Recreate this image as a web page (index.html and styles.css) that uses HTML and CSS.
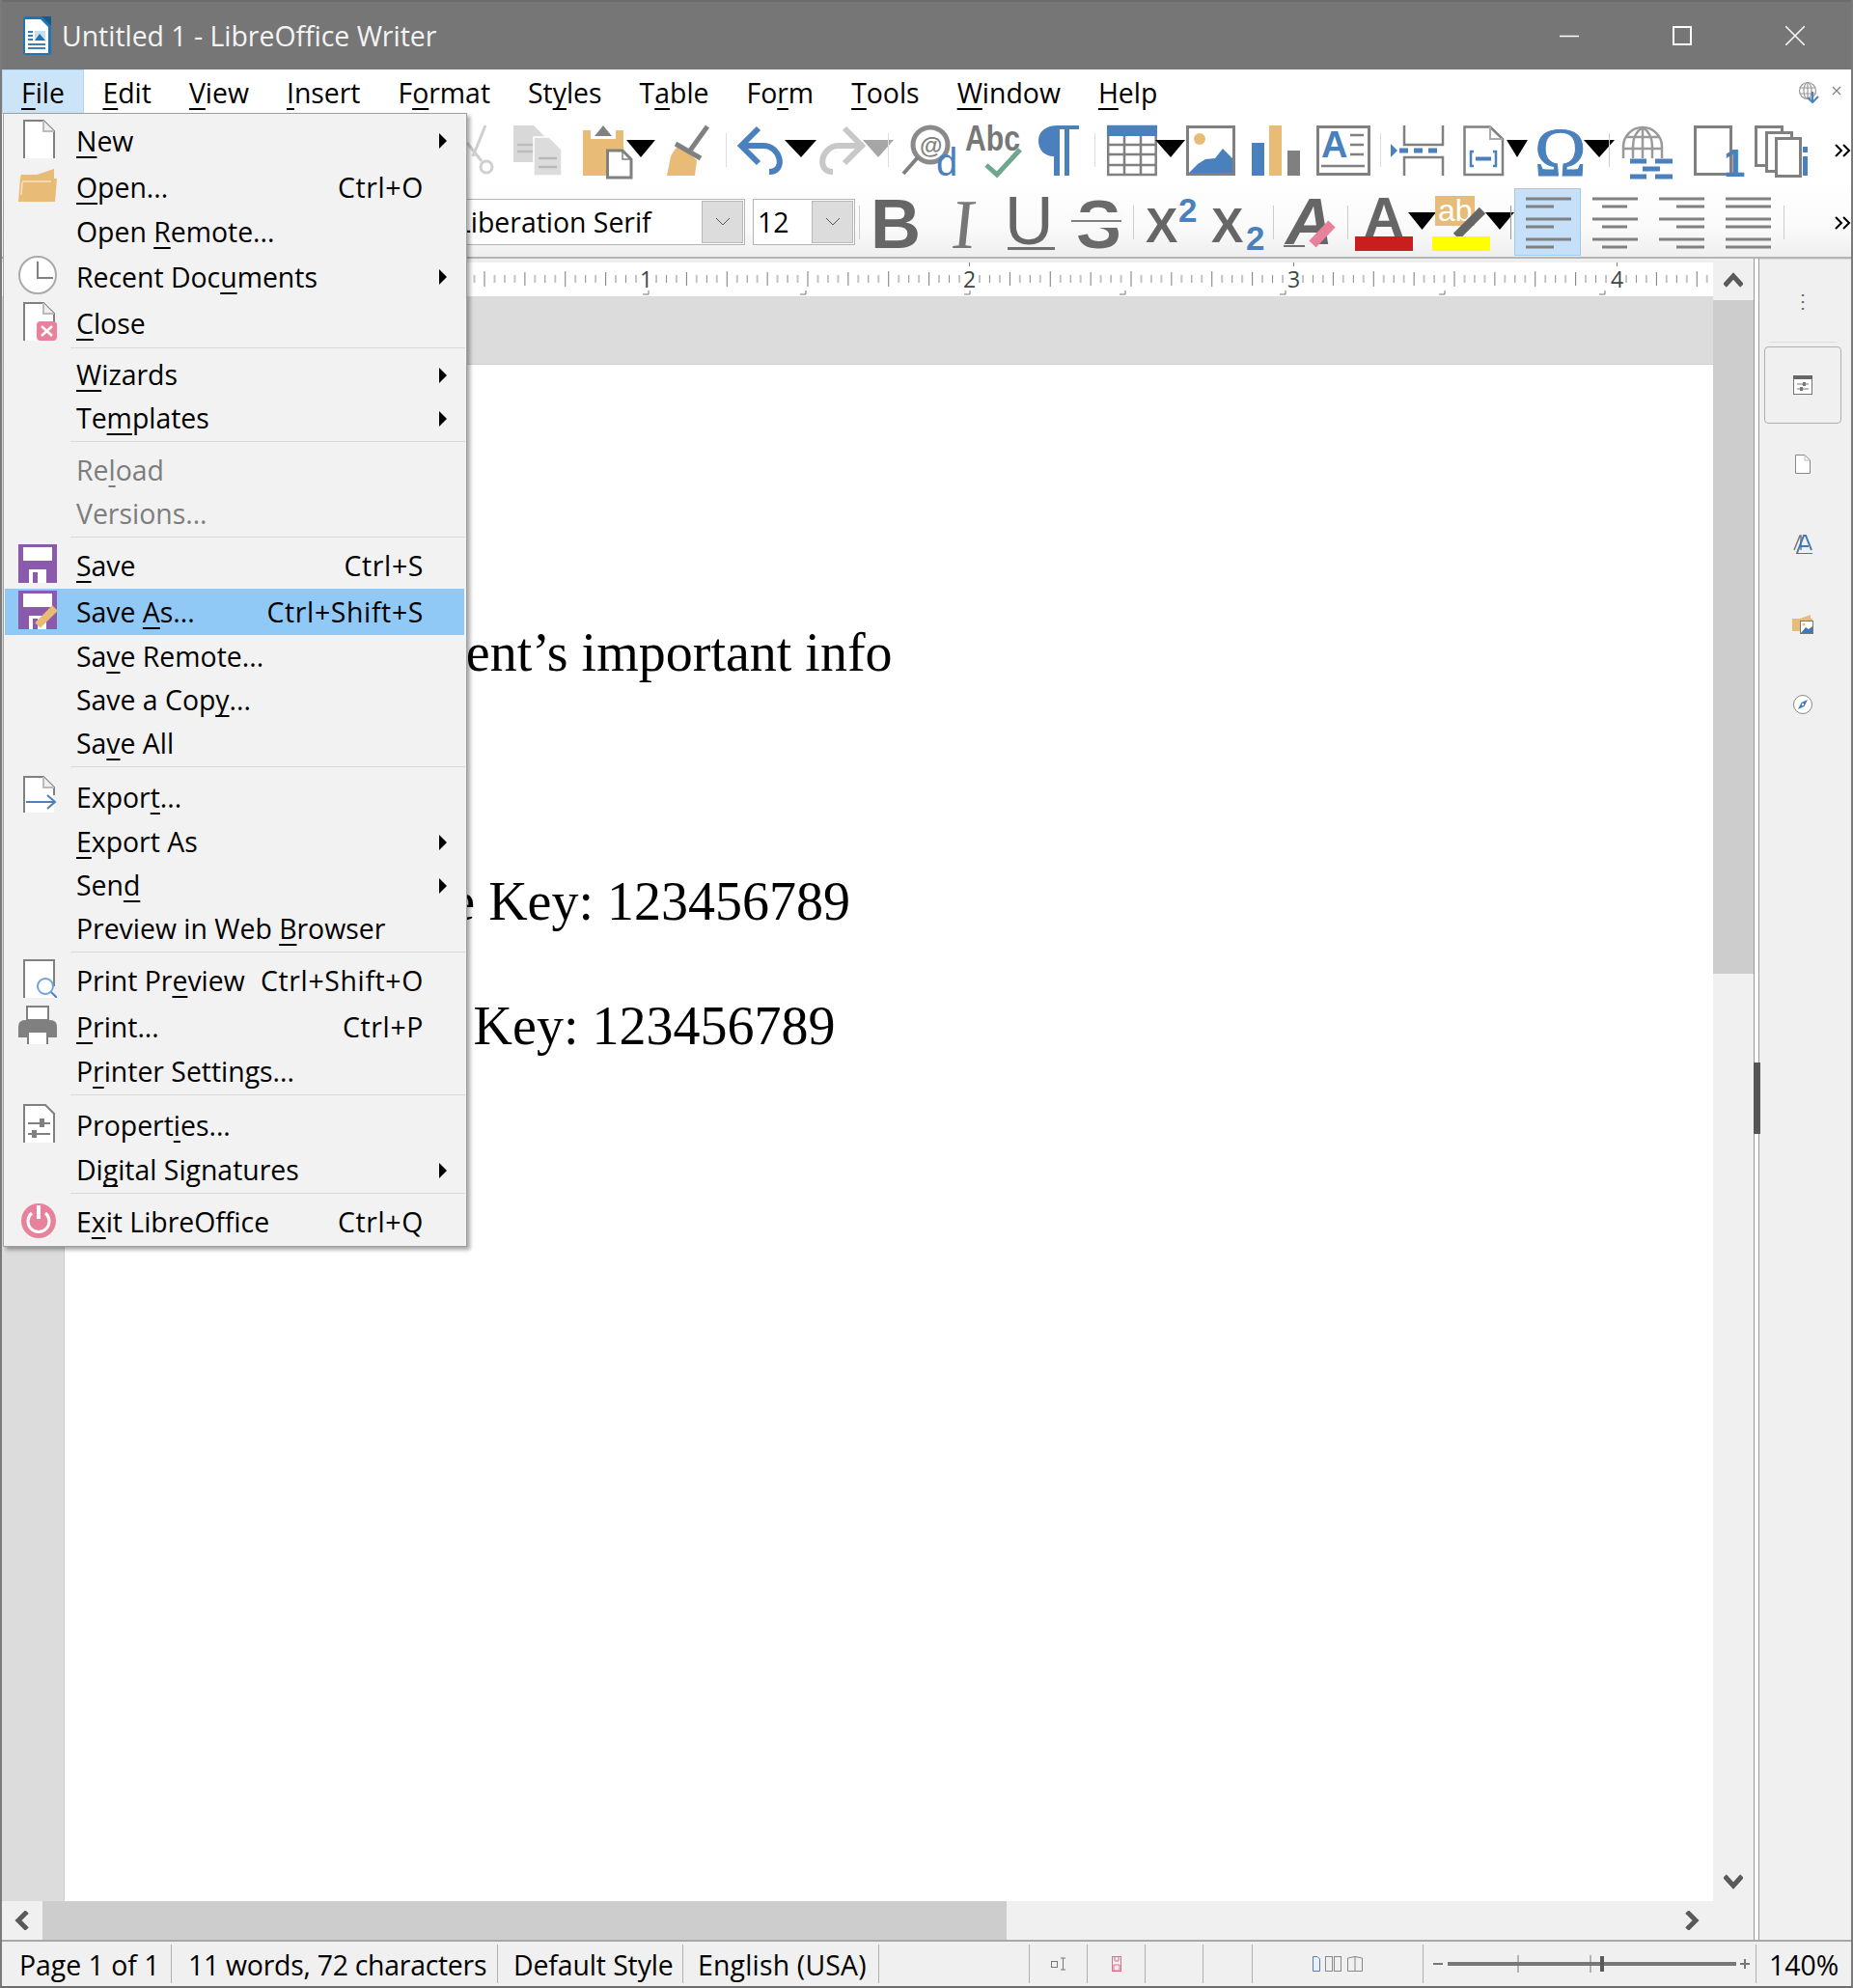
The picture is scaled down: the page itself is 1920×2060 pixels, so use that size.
FILE: index.html
```html
<!DOCTYPE html>
<html lang="en">
<head>
<meta charset="utf-8">
<title>Untitled 1 - LibreOffice Writer</title>
<link rel="stylesheet" href="styles.css">
</head>
<body>
<div class="window">
  <header class="titlebar">
    <svg class="app-icon" width="30" height="40" viewBox="0 0 30 40">
      <path d="M1 3Q1 0 4 0H20L30 10V37Q30 40 27 40H4Q1 40 1 37Z" fill="#1f74b5"/>
      <path d="M3 3H19L27 11V38H3Z" fill="#fff"/>
      <path d="M20 0L30 0V10Z" fill="#125a92"/>
      <path d="M6 15H11V17H6ZM6 19H11V21H6ZM6 23H11V25H6ZM6 28H24V30H6ZM6 32H24V34H6Z" fill="#3a7fb8"/>
      <path d="M13 15H24V25H13Z" fill="#c9dff0"/><path d="M13 25L18 18L24 25Z" fill="#1f74b5"/>
    </svg>
    <span class="title">Untitled 1 - LibreOffice Writer</span>
    <div class="win-controls">
      <svg width="20" height="20" viewBox="0 0 20 20"><path d="M0 10.5H20" stroke="#fff" stroke-width="1.5"/></svg>
      <svg width="20" height="20" viewBox="0 0 20 20"><rect x="1" y="1" width="18" height="18" fill="none" stroke="#fff" stroke-width="2"/></svg>
      <svg width="20" height="20" viewBox="0 0 20 20"><path d="M0 0L20 20M20 0L0 20" stroke="#fff" stroke-width="1.5"/></svg>
    </div>
  </header>

  <nav class="menubar">
    <span class="menu-top active"><u>F</u>ile</span>
    <span class="menu-top"><u>E</u>dit</span>
    <span class="menu-top"><u>V</u>iew</span>
    <span class="menu-top"><u>I</u>nsert</span>
    <span class="menu-top">F<u>o</u>rmat</span>
    <span class="menu-top">St<u>y</u>les</span>
    <span class="menu-top">T<u>a</u>ble</span>
    <span class="menu-top">Fo<u>r</u>m</span>
    <span class="menu-top"><u>T</u>ools</span>
    <span class="menu-top"><u>W</u>indow</span>
    <span class="menu-top"><u>H</u>elp</span>
    <div class="menubar-end">
      <svg width="24" height="24" viewBox="0 0 24 24" fill="none" stroke="#999" stroke-width="1.2">
        <circle cx="10" cy="10" r="8.5"/><ellipse cx="10" cy="10" rx="4" ry="8.5"/><path d="M1.5 7H18.5M1.5 13H18.5M10 1.5V18.5"/>
        <path d="M15 11V21M10 17L15 22L21 16" stroke="#4a80bc" stroke-width="2"/>
      </svg>
      <svg width="10" height="10" viewBox="0 0 10 10"><path d="M1 1L9 9M9 1L1 9" stroke="#808080" stroke-width="1.2"/></svg>
    </div>
  </nav>

  <div class="toolbars">
    <div class="toolrow toolrow-std">
      <svg class="ti" width="47" height="64" viewBox="0 0 47 64" fill="none" stroke="#cfcfcf" stroke-width="3"><path d="M19 4L6 36M0 22L15 41"/><circle cx="20" cy="47" r="6"/></svg>
      <svg class="ti" width="73" height="64" viewBox="0 0 73 64">
        <path d="M1 4H22L34 16V42H1Z" fill="#d8d8d8"/><path d="M5 24H24M5 31H24" stroke="#bdbdbd" stroke-width="2.5"/>
        <path d="M22 16H38L51 29V56H22Z" fill="#dcdcdc" stroke="#fff" stroke-width="1.5"/><path d="M27 38H46M27 47H46" stroke="#b8b8b8" stroke-width="2.5"/>
      </svg>
      <svg class="ti" width="87" height="64" viewBox="0 0 87 64">
        <rect x="0" y="9" width="42" height="47" fill="#e8bc77"/><rect x="8" y="9" width="26" height="9" fill="#fff"/><path d="M12 15L17 9L21 4L25 9L30 15Z" fill="#808080"/>
        <path d="M25.500 30H41L50 39V58H25.500Z" fill="#fff" stroke="#808080" stroke-width="3"/><path d="M41 30V39H50" fill="none" stroke="#808080" stroke-width="1.500"/>
        <polygon points="45,19 75,19 60,37" fill="#000"/>
      </svg>
      <svg class="ti" width="74" height="64" viewBox="0 0 74 64">
        <path d="M0 56L4 36Q8 28 13 24L31 40L29 56Z" fill="#e8bc77"/><path d="M9 23L35 38M24 30L42 5" stroke="#808080" stroke-width="5" fill="none"/>
        <rect x="61" y="12" width="1" height="35" fill="#ddd"/>
      </svg>
      <svg class="ti" width="80" height="64" viewBox="0 0 80 64">
        <path d="M2 25H26C44 25 50 52 32 52M21 7L3 25L21 43" fill="none" stroke="#4a80bc" stroke-width="6"/>
        <polygon points="48,19 81,19 65,37" fill="#000"/>
      </svg>
      <svg class="ti" width="89" height="64" viewBox="0 0 89 64">
        <path d="M50 25H24C6 25 0 52 18 52M30 7L48 25L30 43" fill="none" stroke="#c8c8c8" stroke-width="6"/>
        <polygon points="49,19 81,19 65,37" fill="#a6a6a6"/><rect x="75" y="12" width="1" height="35" fill="#ddd"/>
      </svg>
      <svg class="ti" width="66" height="64" viewBox="0 0 66 64">
        <circle cx="30" cy="24" r="18" fill="none" stroke="#8a8a8a" stroke-width="5"/><path d="M17 37L2 54" stroke="#808080" stroke-width="4"/>
        <text x="19" y="33" class="t-sans t-bold" font-size="24" fill="#808080">@</text><text x="36" y="56" class="t-sans" font-size="40" fill="#4a80bc">d</text>
      </svg>
      <svg class="ti" width="76" height="64" viewBox="0 0 76 64">
        <text x="0" y="30" class="t-sans t-bold" font-size="36" fill="#777" textLength="57" lengthAdjust="spacingAndGlyphs">Abc</text>
        <path d="M22 45L33 55L57 29" fill="none" stroke="#6da88c" stroke-width="5"/>
      </svg>
      <svg class="ti" width="71" height="64" viewBox="0 0 71 64">
        <path d="M20 4H42V8H32V56H27V8H22V56H16V36C6 36 0 29 0 20C0 10 8 4 20 4Z" fill="#4a80bc"/><rect x="58" y="12" width="1" height="35" fill="#ddd"/>
      </svg>
      <svg class="ti" width="82" height="64" viewBox="0 0 82 64">
        <rect x="1.200" y="5" width="49.500" height="50" fill="#fff" stroke="#808080" stroke-width="2.500"/><rect x="0" y="4" width="52" height="11" fill="#4a80bc"/>
        <path d="M1 24H51M1 34H51M1 45H51M18 15V55M35 15V55" stroke="#808080" stroke-width="2.500"/>
        <polygon points="50,19 81,19 66,37" fill="#000"/>
      </svg>
      <svg class="ti" width="68" height="64" viewBox="0 0 68 64">
        <rect x="1.500" y="5.500" width="48" height="49" fill="#fff" stroke="#808080" stroke-width="3"/><circle cx="14" cy="18" r="6" fill="#e8bc77"/>
        <polygon points="3,53 12,44 20,39 30,38 38,28 48,38 48,53" fill="#4a80bc"/>
      </svg>
      <svg class="ti" width="67" height="64" viewBox="0 0 67 64">
        <rect x="0" y="22" width="13" height="34" fill="#4a80bc"/><rect x="18" y="4" width="13" height="52" fill="#e8bc77"/><rect x="37" y="30" width="13" height="26" fill="#808080"/>
      </svg>
      <svg class="ti" width="77" height="64" viewBox="0 0 77 64">
        <rect x="1.500" y="5.500" width="53" height="49" fill="#fff" stroke="#808080" stroke-width="3"/><text x="5" y="37" class="t-sans t-bold" font-size="38" fill="#4a80bc">A</text>
        <path d="M35 14H49M35 24H49M35 34H49M5 46H50" stroke="#808080" stroke-width="2.500"/><rect x="66" y="12" width="1" height="35" fill="#ddd"/>
      </svg>
      <svg class="ti" width="75" height="64" viewBox="0 0 75 64">
        <polygon points="0,23 7,30 0,37" fill="#4a80bc"/><path d="M9 30H54" stroke="#4a80bc" stroke-width="5" stroke-dasharray="9 6"/>
        <path d="M14 4V24H54V4M14 56V37H54V56" fill="none" stroke="#808080" stroke-width="2.500"/>
      </svg>
      <svg class="ti" width="76" height="64" viewBox="0 0 76 64">
        <path d="M1.500 5.500H28L41 18V55H1.500Z" fill="#fff" stroke="#808080" stroke-width="2.500"/><path d="M28 5V18H41" fill="none" stroke="#aaa" stroke-width="2"/>
        <path d="M11 31H8V46H11M31 31H34V46H31" fill="none" stroke="#4a80bc" stroke-width="2.500"/><path d="M13 38.500H29" stroke="#4a80bc" stroke-width="4"/>
        <polygon points="45,19 67,19 56,37" fill="#000"/>
      </svg>
      <svg class="ti" width="88" height="64" viewBox="0 0 88 64">
        <text x="-2" y="56" class="t-serif" font-size="72" fill="#4a80bc" stroke="#4a80bc" stroke-width="1">Ω</text>
        <polygon points="49,19 81,19 65,37" fill="#000"/><rect x="75" y="12" width="1" height="35" fill="#ccc"/>
      </svg>
      <svg class="ti" width="75" height="64" viewBox="0 0 75 64">
        <g fill="none" stroke="#9a9a9a" stroke-width="2.500"><path d="M2 38V26A20 20 0 0 1 42 26V38"/><path d="M22 6V38M12 38V26Q12 12 22 6Q32 12 32 26V38M4 16H40M2 28H42"/></g>
        <path d="M9 41H26M35 41H53M22 49H40M9 57H26M35 57H53" stroke="#4a80bc" stroke-width="5"/>
      </svg>
      <svg class="ti" width="63" height="64" viewBox="0 0 63 64">
        <rect x="1.500" y="5.500" width="37" height="49" fill="#fff" stroke="#808080" stroke-width="3"/>
        <text x="31" y="57" class="t-sans t-bold" font-size="40" fill="#4a80bc">1</text>
      </svg>
      <svg class="ti" width="83" height="64" viewBox="0 0 83 64" fill="#fff" stroke="#808080" stroke-width="3">
        <rect x="1.500" y="5.500" width="27" height="40"/><rect x="12.500" y="11.500" width="26" height="40"/><rect x="22.500" y="17.500" width="25" height="39"/>
        <path d="M50 26H55V32H50ZM50 36H55V56H50Z" fill="#4a80bc" stroke="none"/>
      </svg>
      <svg class="ti" width="17" height="64" viewBox="0 0 17 64" fill="none" stroke="#000" stroke-width="2"><path d="M1 24L7 30L1 36M9 24L15 30L9 36"/></svg>
    </div>

    <div class="toolrow toolrow-fmt">
      <div class="combo combo-font"><span class="combo-text">Liberation Serif</span>
        <span class="combo-btn"><svg width="14" height="8" viewBox="0 0 14 8"><path d="M0 0L7 7L14 0" fill="none" stroke="#555"/></svg></span></div>
      <div class="combo combo-size"><span class="combo-text">12</span>
        <span class="combo-btn"><svg width="14" height="8" viewBox="0 0 14 8"><path d="M0 0L7 7L14 0" fill="none" stroke="#555"/></svg></span></div>
      <svg class="ti" width="21" height="72" viewBox="0 0 21 72"><rect x="4" y="19" width="1" height="35" fill="#ccc"/></svg>
      <svg class="ti" width="77" height="72" viewBox="0 0 77 72"><text x="-5" y="63" class="t-sans t-bold" font-size="72" fill="#666">B</text></svg>
      <svg class="ti" width="59" height="72" viewBox="0 0 59 72"><text x="6" y="63" class="t-serif" font-size="73" fill="#777" transform="skewX(-6) translate(1 0)">I</text></svg>
      <svg class="ti" width="67" height="72" viewBox="0 0 67 72"><text x="-2" y="59" class="t-sans" font-size="70" fill="#666">U</text><rect x="1" y="62" width="49" height="3" fill="#707070"/></svg>
      <svg class="ti" width="78" height="72" viewBox="0 0 78 72">
        <text x="5" y="63" class="t-sans t-bold" font-size="70" fill="#6a6a6a">S</text><rect x="0" y="26" width="54" height="16" fill="#fafafa"/><rect x="0" y="34" width="52" height="2" fill="#808080"/>
        <rect x="64" y="19" width="1" height="35" fill="#ccc"/>
      </svg>
      <svg class="ti" width="68" height="72" viewBox="0 0 68 72"><text x="-1" y="57" class="t-sans t-bold" font-size="50" fill="#666">X</text><text x="33" y="36" class="t-sans t-bold" font-size="35" fill="#4a80bc">2</text></svg>
      <svg class="ti" width="74" height="72" viewBox="0 0 74 72"><text x="-1" y="57" class="t-sans t-bold" font-size="50" fill="#666">X</text><text x="35" y="65" class="t-sans t-bold" font-size="35" fill="#4a80bc">2</text><rect x="63" y="19" width="1" height="35" fill="#ccc"/></svg>
      <svg class="ti" width="74" height="72" viewBox="0 0 74 72">
        <text x="2" y="59" class="t-sans t-italic t-bold" font-size="68" fill="#666">A</text><rect x="0" y="60" width="22" height="2" fill="#707070"/>
        <path d="M30 59L50 38" stroke="#e8819c" stroke-width="10"/><rect x="66" y="19" width="1" height="35" fill="#ccc"/>
      </svg>
      <svg class="ti" width="80" height="72" viewBox="0 0 80 72">
        <text x="9" y="51" class="t-sans t-bold" font-size="58" fill="#666">A</text><rect x="0" y="51" width="60" height="15" fill="#c81e1e"/><polygon points="55,26 84,26 69.500,44" fill="#000"/>
      </svg>
      <svg class="ti" width="85" height="72" viewBox="0 0 85 72">
        <rect x="3" y="9" width="41" height="31" fill="#e8bc77"/><text x="6" y="35" class="t-sans" font-size="32" fill="#fff">ab</text>
        <path d="M25 51L52 24" stroke="#666" stroke-width="9"/><rect x="0" y="51" width="60" height="15" fill="#ff0"/>
        <polygon points="55,26 85,26 70,44" fill="#000"/><rect x="81" y="19" width="1" height="35" fill="#999"/>
      </svg>
      <svg class="ti" width="69" height="72" viewBox="0 0 69 72">
        <rect x="0.500" y="1.500" width="68" height="69" fill="#c5e0f8" stroke="#9ccaf0"/>
        <path d="M12 12H59M12 20H41M12 33H59M12 41H41M12 54H59M12 62H41" stroke="#808080" stroke-width="3"/>
      </svg>
      <svg class="ti" width="69" height="72" viewBox="0 0 69 72"><path d="M12 12H59M22 20H48M12 33H59M22 41H48M12 54H59M22 62H48" stroke="#808080" stroke-width="3"/></svg>
      <svg class="ti" width="69" height="72" viewBox="0 0 69 72"><path d="M12 12H59M30 20H59M12 33H59M30 41H59M12 54H59M30 62H59" stroke="#808080" stroke-width="3"/></svg>
      <svg class="ti" width="81" height="72" viewBox="0 0 81 72"><path d="M12 12H59M12 20H59M12 33H59M12 41H59M12 54H59M12 62H59" stroke="#808080" stroke-width="3"/><rect x="72" y="19" width="1" height="35" fill="#ccc"/></svg>
      <svg class="ti chev" width="61" height="72" viewBox="0 0 61 72" fill="none" stroke="#000" stroke-width="2"><path d="M45 31L51 37L45 43M53 31L59 37L53 43"/></svg>
    </div>
  </div>

  <main class="workspace">
    <section class="docarea">
      <div class="ruler">
        <svg width="1773" height="35" viewBox="0 0 1773 35">
          <defs>
            <pattern id="ticks" patternUnits="userSpaceOnUse" width="83.750" height="35" x="667">
              <rect x="0" y="9" width="1" height="16" fill="#777"/>
              <rect x="10.500" y="13" width="1" height="8" fill="#888"/><rect x="21" y="13" width="1" height="8" fill="#888"/><rect x="31.400" y="13" width="1" height="8" fill="#888"/>
              <rect x="41.900" y="10" width="1" height="14" fill="#777"/><rect x="52.300" y="13" width="1" height="8" fill="#888"/><rect x="62.800" y="13" width="1" height="8" fill="#888"/><rect x="73.300" y="13" width="1" height="8" fill="#888"/>
            </pattern>
          </defs>
          <rect x="0" y="0" width="1773" height="35" fill="url(#ticks)"/>
          <g fill="#fff"><rect x="660" y="8" width="14" height="19"/><rect x="995" y="8" width="14" height="19"/><rect x="1331" y="8" width="14" height="19"/><rect x="1666" y="8" width="14" height="19"/></g>
          <g fill="#777"><rect x="1002" y="0" width="1" height="4"/><rect x="1338" y="0" width="1" height="4"/><rect x="1673" y="0" width="1" height="4"/>
            <path d="M664 33H670V29M827 33H833V29M997 33H1003V29M1158 33H1164V29M1324 33H1330V29M1489 33H1495V29M1655 33H1661V29" stroke="#777" fill="none"/></g>
          <g class="ruler-num" fill="#444"><text x="661" y="26">1</text><text x="996" y="26">2</text><text x="1332" y="26">3</text><text x="1667" y="26">4</text></g>
        </svg>
      </div>
      <div class="doc-top"></div>
      <div class="doc-body">
        <div class="doc-margin"></div>
        <article class="page">
          <p class="line line-1">Document’s important info</p>
          <p class="line line-2">License Key: 123456789</p>
          <p class="line line-3">Private Key: 123456789</p>
        </article>
      </div>
    </section>

    <aside class="vscroll">
      <div class="sb-btn sb-up"><svg width="20" height="16" viewBox="0 0 20 16"><path d="M1 14L10 4L19 14" fill="none" stroke="#5a5a5a" stroke-width="5"/></svg></div>
      <div class="sb-thumb-v"></div>
      <div class="sb-rest"></div>
      <div class="sb-btn sb-down"><svg width="20" height="16" viewBox="0 0 20 16"><path d="M1 2L10 12L19 2" fill="none" stroke="#5a5a5a" stroke-width="5"/></svg></div>
    </aside>

    <div class="sash"><span class="sash-handle"></span></div>

    <aside class="sidebar">
      <div class="side-dots">⋮</div>
      <div class="side-tab side-tab-active">
        <svg width="20" height="20" viewBox="0 0 20 20"><rect x="0.500" y="0.500" width="19" height="19" fill="#fff" stroke="#777"/><rect x="0" y="0" width="20" height="4" fill="#666"/><path d="M4 9H16M4 14H16" stroke="#777"/><rect x="10" y="7" width="3" height="4" fill="#777"/><rect x="7" y="12" width="3" height="4" fill="#777"/></svg>
      </div>
      <div class="side-tab">
        <svg width="20" height="20" viewBox="0 0 20 20"><path d="M2.500 0.500H12L17.500 6V19.500H2.500Z" fill="#fff" stroke="#888"/><path d="M12 0.500V6H17.500" fill="none" stroke="#bbb"/></svg>
      </div>
      <div class="side-tab">
        <svg width="20" height="20" viewBox="0 0 20 20"><path d="M1 16L7 1H8L8 16" fill="none" stroke="#777" stroke-width="1.500"/><path d="M4 19L11 1H13L19 16M7 12H16" fill="none" stroke="#3f79b8" stroke-width="2"/><path d="M3 19.500H20" stroke="#3f79b8"/></svg>
      </div>
      <div class="side-tab">
        <svg width="22" height="20" viewBox="0 0 22 20"><path d="M0 4H8L19 0V4H21V8H8V17H0Z" fill="#e8bc77"/><rect x="8.500" y="6.500" width="13" height="13" fill="#fff" stroke="#777"/><circle cx="12" cy="10" r="1.500" fill="#e8bc77"/><path d="M9 19L14 13L17 15L21 12V19Z" fill="#3f79b8"/></svg>
      </div>
      <div class="side-tab">
        <svg width="20" height="20" viewBox="0 0 20 20"><circle cx="10" cy="10" r="9.500" fill="#fff" stroke="#888"/><path d="M15 5L11.500 12L5 15L8.500 8Z" fill="#3f79b8"/><circle cx="10" cy="10" r="1.200" fill="#fff"/></svg>
      </div>
    </aside>

    <div class="hscroll">
      <div class="sb-btn sb-left"><svg width="16" height="20" viewBox="0 0 16 20"><path d="M13 1L4 10L13 19" fill="none" stroke="#5a5a5a" stroke-width="5"/></svg></div>
      <div class="sb-thumb-h"></div>
      <div class="sb-rest-h"><svg width="16" height="20" viewBox="0 0 16 20"><path d="M3 1L12 10L3 19" fill="none" stroke="#5a5a5a" stroke-width="5"/></svg></div>
    </div>
  </main>

  <footer class="statusbar">
    <span class="cell c-text c-page">Page 1 of 1</span>
    <span class="cell c-text c-words">11 words, 72 characters</span>
    <span class="cell c-text c-style">Default Style</span>
    <span class="cell c-text c-lang">English (USA)</span>
    <span class="cell c-blank"></span>
    <span class="cell c-slot"><svg width="16" height="14" viewBox="0 0 16 14" fill="none" stroke="#777"><rect x="0.500" y="4.500" width="6" height="6"/><path d="M10 1H15M12.500 1V13M10 13H15"/></svg></span>
    <span class="cell c-slot"><svg width="10" height="16" viewBox="0 0 10 16" fill="none" stroke="#e06a8a"><rect x="0.500" y="0.500" width="9" height="15"/><path d="M3 1V5H7V1M2 9H8V15H2Z"/></svg></span>
    <span class="cell c-slot"></span>
    <span class="cell c-narrow"></span>
    <span class="cell c-layout">
      <svg width="54" height="16" viewBox="0 0 54 16" fill="none" stroke="#888">
        <path d="M1.500 0.500H6L8.500 3V15.500H1.500Z" stroke="#4a80bc"/><rect x="14.500" y="0.500" width="7" height="15"/><rect x="23.500" y="0.500" width="7" height="15"/><path d="M37.500 2L45 0.500L52.500 2V15.500H37.500ZM45 0.500V15.500"/>
      </svg>
    </span>
    <span class="cell c-zoom">
      <svg width="344" height="20" viewBox="0 0 344 20">
        <path d="M10 10H20M328 10H338M333 5V15" stroke="#777" stroke-width="2"/>
        <path d="M25 10H324" stroke="#777" stroke-width="4"/><path d="M98 1V19M173 1V19" stroke="#777"/><rect x="183" y="2" width="4" height="16" fill="#5a5a5a"/>
      </svg>
    </span>
    <span class="cell c-text c-pct">140%</span>
  </footer>

  <div class="menu" role="menu">
    <div class="item item-i"><svg class="mi" width="40" height="40" viewBox="0 0 40 40"><path d="M6 40V1H26L37 12V40Z" fill="#fff"/><path d="M6 40V1H26L37 12V40" fill="none" stroke="#808080" stroke-width="2"/><path d="M26 1V12H37" fill="#eee" stroke="#bbb" stroke-width="2"/></svg><span class="lb"><u>N</u>ew</span><span class="ar"></span></div>
    <div class="item item-i"><svg class="mi" width="40" height="40" viewBox="0 0 40 40"><path d="M3 9H19L37 3V13L40 13L38 37H0L2 12Z" fill="#e8bc77"/><path d="M4 16H34" stroke="#f6e3c4" stroke-width="1.500"/><path d="M4 17L3 30" stroke="#f6e3c4" stroke-width="1.500"/></svg><span class="lb"><u>O</u>pen...</span><span class="sc">Ctrl+O</span></div>
    <div class="item"><span class="lb">Open <u>R</u>emote...</span></div>
    <div class="item item-i"><svg class="mi" width="40" height="40" viewBox="0 0 40 40"><circle cx="20" cy="20" r="19" fill="#fff" stroke="#aaa" stroke-width="2"/><path d="M20 6V23H36" fill="none" stroke="#808080" stroke-width="2"/></svg><span class="lb">Recent Doc<u>u</u>ments</span><span class="ar"></span></div>
    <div class="item item-i"><svg class="mi" width="40" height="40" viewBox="0 0 40 40"><path d="M6 40V1H26L37 12V40Z" fill="#fff"/><path d="M6 40V1H26L37 12V24" fill="none" stroke="#808080" stroke-width="2"/><path d="M26 1V12H37" fill="#eee" stroke="#bbb" stroke-width="2"/><rect x="19" y="20" width="21" height="20" rx="4" fill="#e8819c"/><path d="M24 25L35 35M35 25L24 35" stroke="#fff" stroke-width="2.500"/></svg><span class="lb"><u>C</u>lose</span></div>
    <hr class="sep">
    <div class="item"><span class="lb"><u>W</u>izards</span><span class="ar"></span></div>
    <div class="item"><span class="lb">Te<u>m</u>plates</span><span class="ar"></span></div>
    <hr class="sep sep-wide">
    <div class="item item-off"><span class="lb">Re<u>l</u>oad</span></div>
    <div class="item item-off"><span class="lb">Versions...</span></div>
    <hr class="sep">
    <div class="item item-i"><svg class="mi" width="40" height="40" viewBox="0 0 40 40"><rect width="40" height="40" fill="#8c5aad"/><rect x="5" y="3" width="30" height="14" fill="#fff"/><rect x="11" y="26" width="18" height="14" fill="#fff"/><rect x="15" y="29" width="5" height="11" fill="#8c5aad"/></svg><span class="lb"><u>S</u>ave</span><span class="sc">Ctrl+S</span></div>
    <div class="item item-i item-on"><svg class="mi" width="40" height="40" viewBox="0 0 40 40"><rect width="40" height="40" fill="#8c5aad"/><rect x="5" y="3" width="30" height="14" fill="#fff"/><rect x="11" y="26" width="18" height="14" fill="#fff"/><rect x="15" y="29" width="5" height="11" fill="#8c5aad"/><path d="M20 36L38 18" stroke="#e8bc77" stroke-width="8"/></svg><span class="lb">Save <u>A</u>s...</span><span class="sc">Ctrl+Shift+S</span></div>
    <div class="item"><span class="lb">Sa<u>v</u>e Remote...</span></div>
    <div class="item"><span class="lb">Save a Cop<u>y</u>...</span></div>
    <div class="item"><span class="lb">Sa<u>v</u>e All</span></div>
    <hr class="sep sep-wide">
    <div class="item item-i"><svg class="mi" width="40" height="40" viewBox="0 0 40 40"><path d="M6 38V1H26L37 12V38Z" fill="#fff"/><path d="M6 38V1H26L37 12V20" fill="none" stroke="#808080" stroke-width="2"/><path d="M26 1V12H37" fill="#eee" stroke="#bbb" stroke-width="2"/><path d="M8 27H38M30 20L38 27L30 34" fill="none" stroke="#4a80bc" stroke-width="2"/></svg><span class="lb">Expor<u>t</u>...</span></div>
    <div class="item"><span class="lb"><u>E</u>xport As</span><span class="ar"></span></div>
    <div class="item"><span class="lb">Sen<u>d</u></span><span class="ar"></span></div>
    <div class="item"><span class="lb">Preview in Web <u>B</u>rowser</span></div>
    <hr class="sep">
    <div class="item item-i"><svg class="mi" width="40" height="40" viewBox="0 0 40 40"><rect x="6" y="1" width="31" height="39" fill="#fff"/><path d="M6 40V1H37V28" fill="none" stroke="#808080" stroke-width="2"/><circle cx="28" cy="28" r="8" fill="#fff" stroke="#6fa3d8" stroke-width="2"/><path d="M34 34L40 40" stroke="#4a80bc" stroke-width="2"/></svg><span class="lb">Print Pr<u>e</u>view</span><span class="sc">Ctrl+Shift+O</span></div>
    <div class="item item-i"><svg class="mi" width="40" height="40" viewBox="0 0 40 40"><rect x="9" y="1" width="22" height="14" fill="#fff" stroke="#808080" stroke-width="2"/><path d="M0 22Q0 15 7 15H33Q40 15 40 22V33H31V40H9V33H0Z" fill="#808080"/><rect x="11" y="28" width="18" height="12" fill="#fff"/></svg><span class="lb"><u>P</u>rint...</span><span class="sc">Ctrl+P</span></div>
    <div class="item"><span class="lb">P<u>r</u>inter Settings...</span></div>
    <hr class="sep sep-wide">
    <div class="item item-i"><svg class="mi" width="40" height="40" viewBox="0 0 40 40"><path d="M6 40V1H28L37 10V40Z" fill="#fff"/><path d="M6 40V1H28L37 10V40" fill="none" stroke="#808080" stroke-width="2"/><path d="M10 20H33M10 31H33" stroke="#808080" stroke-width="2"/><rect x="22" y="15" width="5" height="9" fill="#808080"/><rect x="14" y="27" width="5" height="8" fill="#808080"/></svg><span class="lb">Propert<u>i</u>es...</span></div>
    <div class="item"><span class="lb">Di<u>g</u>ital Signatures</span><span class="ar"></span></div>
    <hr class="sep">
    <div class="item item-i"><svg class="mi" width="40" height="40" viewBox="0 0 40 40"><circle cx="21" cy="21" r="18" fill="#e8819c"/><path d="M14 13A11 11 0 1 0 28 13" fill="none" stroke="#fff" stroke-width="3"/><rect x="19" y="5" width="4" height="14" fill="#fff"/></svg><span class="lb">E<u>x</u>it LibreOffice</span><span class="sc">Ctrl+Q</span></div>
  </div>
</div>
</body>
</html>
```
FILE: styles.css
```css
* { box-sizing: border-box; }
html, body { margin: 0; padding: 0; background: #fff; }
body { font-family: "Open Sans", "Noto Sans", sans-serif; font-size: 28.4px; line-height: 1.2; color: #000; }
u { text-decoration-thickness: 2px; text-underline-offset: 5px; text-decoration-skip-ink: none; }

.window { position: relative; width: 1920px; height: 2060px; overflow: hidden; display: flex; flex-direction: column; border-left: 2px solid #7a7a7a; border-right: 2px solid #7a7a7a; border-bottom: 2px solid #6e6e6e; }

.titlebar { height: 72px; flex: none; background: #767676; border-top: 2px solid #6c6c6c; display: flex; align-items: center; padding-left: 21px; color: #f4f4f4; }
.app-icon { flex: none; }
.title { margin-left: 11px; }
.win-controls { margin-left: auto; display: flex; gap: 97px; padding-right: 48px; }

.menubar { height: 46px; flex: none; background: #fff; display: flex; align-items: stretch; }
.menu-top { padding: 1px 19.5px 0; line-height: 46px; }
.menu-top.active { background: #cce4f7; border: 1px solid #b4d6f2; padding: 1px 19px 0; line-height: 44px; }
.menubar-end { margin-left: auto; display: flex; align-items: flex-start; gap: 11px; padding: 12px 10px 0 0; }
.menubar-end svg:last-child { margin-top: 5px; }

.toolbars { height: 150px; flex: none; background: linear-gradient(#fff 45%, #fafafa 80%, #efefef); border-bottom: 2px solid #b4b4b4; padding-left: 482px; }
.toolrow { display: flex; align-items: flex-start; }
.toolrow-std { height: 76px; padding-top: 8px; }
.toolrow-fmt { height: 72px; margin-left: -84px; }
.ti { display: block; flex: none; overflow: visible; }
.t-sans { font-family: "Liberation Sans", sans-serif; }
.t-serif { font-family: "Liberation Serif", serif; }
.t-bold { font-weight: 700; }
.t-italic { font-style: italic; }

.combo { display: flex; height: 48px; margin-top: 12px; background: #fff; border: 1px solid #b4b4b4; padding: 1px; flex: none; align-items: stretch; }
.combo-font { width: 372px; margin-right: 8px; }
.combo-size { width: 106px; }
.combo-text { flex: 1; line-height: 44px; white-space: nowrap; }
.combo-font .combo-text { padding-left: 71px; }
.combo-size .combo-text { padding-left: 3px; }
.combo-btn { width: 43px; flex: none; background: #dcdcdc; border: 1px solid #b8b8b8; display: flex; align-items: center; justify-content: center; }

.workspace { flex: 1; min-height: 0; display: grid; grid-template-columns: 1773px 42px 6px 95px; grid-template-rows: 1702px 40px; }
.docarea { grid-column: 1; grid-row: 1; display: flex; flex-direction: column; background: #dcdcdc; min-height: 0; }
.ruler { height: 39px; flex: none; background: #fff; border-top: 4px solid #efefef; }
.ruler svg { display: block; }
.ruler-num { font-family: "Open Sans", sans-serif; font-size: 23px; }
.doc-top { height: 71px; flex: none; background: #dcdcdc; border-bottom: 1px solid #d0d0d0; }
.doc-body { flex: 1; display: flex; min-height: 0; }
.doc-margin { width: 65px; flex: none; background: #dcdcdc; border-right: 1px solid #d0d0d0; }
.page { flex: 1; background: #fff; padding: 266px 0 0 251px; font-family: "Liberation Serif", serif; font-size: 56px; line-height: 64px; }
.line { margin: 0; white-space: nowrap; }
.line-2 { margin-top: 194px; }
.line-3 { margin-top: 65px; }

.vscroll { grid-column: 2; grid-row: 1; display: flex; flex-direction: column; background: #f0f0f0; }
.sb-btn { flex: none; display: flex; align-items: center; justify-content: center; background: #f0f0f0; }
.sb-up { height: 43px; }
.sb-thumb-v { height: 698px; flex: none; background: #cdcdcd; }
.sb-rest { flex: 1; }
.sb-down { height: 40px; }

.sash { grid-column: 3; grid-row: 1 / 3; position: relative; background: #fff; border-left: 1px solid #999; border-right: 1px solid #999; }
.sash-handle { position: absolute; left: -1px; top: 833px; width: 7px; height: 74px; background: #555; }

.sidebar { grid-column: 4; grid-row: 1 / 3; background: #f0f0f0; display: flex; flex-direction: column; align-items: stretch; padding: 0 10px 0 5px; border-top: 1px solid #ddd; }
.side-dots { height: 86px; line-height: 86px; text-align: center; font-size: 20px; color: #666; border-bottom: 1px solid #ddd; margin: 0 5px 4px; }
.side-tab { height: 83px; flex: none; display: flex; align-items: center; justify-content: center; }
.side-tab-active { height: 80px; border: 1px solid #b0b0b0; border-radius: 4px; }

.hscroll { grid-column: 1 / 3; grid-row: 2; display: flex; background: #f0f0f0; }
.sb-left { width: 42px; }
.sb-thumb-h { width: 999px; flex: none; background: #cdcdcd; }
.sb-rest-h { flex: 1; display: flex; align-items: center; justify-content: flex-end; padding-right: 56px; }

.statusbar { height: 48px; flex: none; background: #f0f0f0; border-top: 2px solid #a8a8a8; display: flex; align-items: stretch; padding: 3px 0; }
.cell { flex: none; display: flex; align-items: center; justify-content: center; border-right: 1px solid #b0b0b0; white-space: nowrap; }
.c-text { justify-content: flex-start; padding-top: 2px; }
.c-page { width: 176px; padding-left: 18px; }
.c-words { width: 338px; padding-left: 17px; letter-spacing: -0.25px; }
.c-style { width: 192px; padding-left: 16px; letter-spacing: -0.1px; }
.c-lang { width: 203px; padding-left: 15px; letter-spacing: 0.2px; }
.c-blank { width: 156px; }
.c-slot { width: 60px; }
.c-narrow { width: 51px; }
.c-layout { width: 177px; }
.c-zoom { width: 345px; justify-content: flex-start; }
.c-pct { width: 98px; border-right: 0; padding-left: 13px; }

.menu { position: absolute; left: 1px; top: 117px; width: 481px; height: 1175px; background: #f2f2f2; border: 1px solid #a0a0a0; padding: 4px 1px 0; box-shadow: 3px 3px 4px rgba(0, 0, 0, .35); }
.item { display: grid; grid-template-columns: 74px 1fr auto 42px; align-items: center; height: 45px; width: 476px; }
.item-i { height: 48px; }
.mi { grid-column: 1; margin: 2px 0 0 14px; align-self: start; display: block; }
.lb { grid-column: 2; white-space: nowrap; }
.sc { grid-column: 3; white-space: nowrap; letter-spacing: 0.65px; }
.ar { grid-column: 4; justify-self: end; margin-right: 18px; width: 0; height: 0; border-left: 8px solid #000; border-top: 8px solid transparent; border-bottom: 8px solid transparent; }
.item-on { background: #90c8f6; }
.item-off { color: #7d7d7d; }
.sep { height: 1px; border: 0; background: #d8d8d8; margin: 1px 0 5px 68px; }
.sep-wide { margin-bottom: 7px; }
```
